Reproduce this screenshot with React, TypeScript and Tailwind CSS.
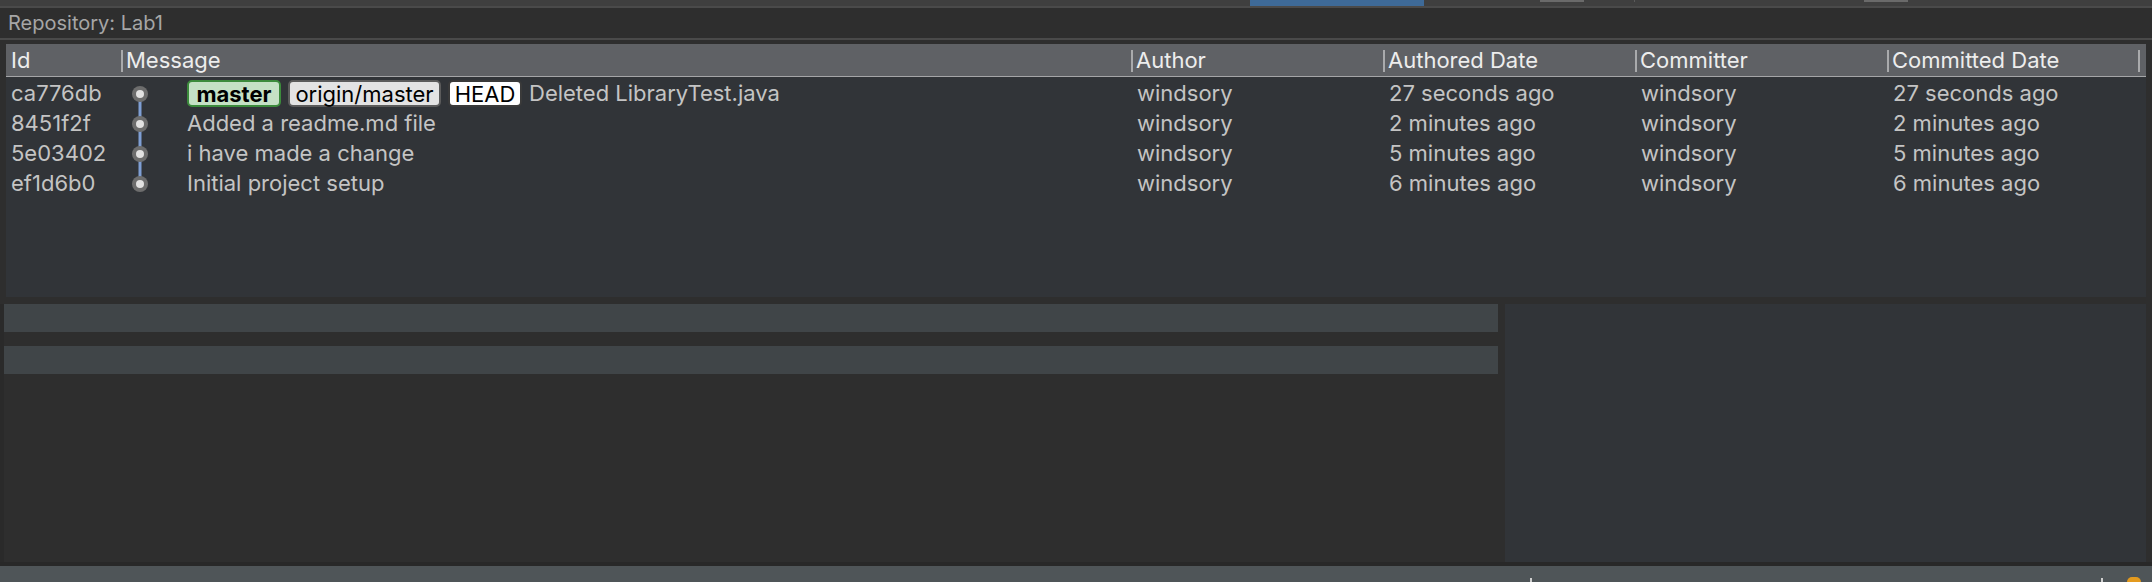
import React from "react";

const rows = [
  { id: "ca776db", msg: "Deleted LibraryTest.java", badges: true, when: "27 seconds ago", pos: "first" },
  { id: "8451f2f", msg: "Added a readme.md file", badges: false, when: "2 minutes ago", pos: "mid" },
  { id: "5e03402", msg: "i have made a change", badges: false, when: "5 minutes ago", pos: "mid" },
  { id: "ef1d6b0", msg: "Initial project setup", badges: false, when: "6 minutes ago", pos: "last" },
];

function Node({ pos }: { pos: string }) {
  return (
    <svg width="38" height="30" viewBox="0 0 38 30" className="shrink-0">
      {pos !== "first" && <line x1="19" y1="0" x2="19" y2="15" stroke="#7f9fd4" strokeWidth="3" />}
      {pos !== "last" && <line x1="19" y1="15" x2="19" y2="30" stroke="#7f9fd4" strokeWidth="3" />}
      <circle cx="19" cy="15" r="8" fill="#6d6d6d" />
      <circle cx="19" cy="15" r="4" fill="#e2e2e2" />
    </svg>
  );
}

function Sep() {
  return <span className="w-[2px] h-[22px] bg-[#a9aaac] mr-[3px] shrink-0" />;
}

const cols = "grid grid-cols-[115px_1010px_252px_252px_252px_251px_1fr]";

export default function App() {
  return (
    <div className="w-[2152px] h-[582px] bg-[#2e2e2e] flex flex-col overflow-hidden font-['Inter',sans-serif] text-[22px]">
      {/* top strip */}
      <div className="h-[6px] bg-[#3f3f3f] flex shrink-0">
        <div className="w-[1250px]" />
        <div className="w-[174px] bg-[#3e6a98]" />
        <div className="w-[116px]" />
        <div className="w-[44px] h-[2px] bg-[#6a6a6a]" />
        <div className="w-[50px]" />
        <div className="w-[1px] h-[2px] bg-[#5a5a5a]" />
        <div className="w-[229px]" />
        <div className="w-[44px] h-[2px] bg-[#6a6a6a]" />
      </div>
      <div className="h-[2px] bg-[#4a4a4a] shrink-0" />
      {/* repository label */}
      <div className="h-[30px] flex items-center pl-[8px] text-[#a6a6a6] text-[20px] shrink-0">Repository: Lab1</div>
      <div className="h-[2px] bg-[#4a4a4a] shrink-0" />
      <div className="h-[4px] shrink-0" />

      {/* table */}
      <div className="h-[253px] shrink-0 flex pl-[6px] pr-[6px]">
        <div className="flex-1 flex flex-col bg-[#313438]">
          <div className={`${cols} h-[33px] bg-[#5f6165] border-b border-[#a5a6a8] text-[#ededed] text-[22px]`}>
            <div className="flex items-center pl-[5px]">Id</div>
            <div className="flex items-center"><Sep />Message</div>
            <div className="flex items-center"><Sep />Author</div>
            <div className="flex items-center"><Sep />Authored Date</div>
            <div className="flex items-center"><Sep />Committer</div>
            <div className="flex items-center"><Sep />Committed Date</div>
            <div className="flex items-center"><Sep /></div>
          </div>
          {rows.map((r) => (
            <div key={r.id} className={`${cols} h-[30px] text-[#c4c4c4]`}>
              <div className="flex items-center pl-[5px]">{r.id}</div>
              <div className="flex items-center">
                <Node pos={r.pos} />
                <div className="ml-[28px] flex items-center gap-[7px]">
                  {r.badges && (
                    <>
                      <span className="h-[27px] w-[94px] flex items-center justify-center rounded-[5px] border-2 border-[#3c8b3c] bg-[#c5e1c5] text-black font-bold leading-none">master</span>
                      <span className="h-[27px] w-[153px] flex items-center justify-center rounded-[5px] border-2 border-[#5b5b5b] bg-[#e3e3e3] text-black leading-none">origin/master</span>
                      <span className="h-[27px] w-[74px] flex items-center justify-center rounded-[5px] border-2 border-[#3a3a3a] bg-white text-black leading-none">HEAD</span>
                    </>
                  )}
                  <span>{r.msg}</span>
                </div>
              </div>
              <div className="flex items-center pl-[6px]">windsory</div>
              <div className="flex items-center pl-[6px]">{r.when}</div>
              <div className="flex items-center pl-[6px]">windsory</div>
              <div className="flex items-center pl-[6px]">{r.when}</div>
              <div />
            </div>
          ))}
        </div>
      </div>

      <div className="h-[7px] shrink-0" />

      {/* bottom panes */}
      <div className="h-[258px] shrink-0 flex pr-[6px]">
        <div className="w-[4px] bg-[#2a2a2a]" />
        <div className="w-[1494px] flex flex-col">
          <div className="h-[28px] bg-[#404548]" />
          <div className="h-[14px]" />
          <div className="h-[28px] bg-[#404548]" />
        </div>
        <div className="w-[7px]" />
        <div className="flex-1 bg-[#313438]" />
      </div>
      <div className="h-[4px] bg-[#282828] shrink-0" />

      {/* status bar */}
      <div className="h-[16px] bg-[#4f5558] flex items-end shrink-0">
        <div className="w-[1530px]" />
        <div className="w-[2px] h-[4px] bg-[#cfcfcf]" />
        <div className="w-[569px]" />
        <div className="w-[2px] h-[4px] bg-[#cfcfcf]" />
        <div className="w-[24px]" />
        <div className="w-[14px] h-[5px] rounded-t-full bg-[#e39a1e]" />
      </div>
    </div>
  );
}
